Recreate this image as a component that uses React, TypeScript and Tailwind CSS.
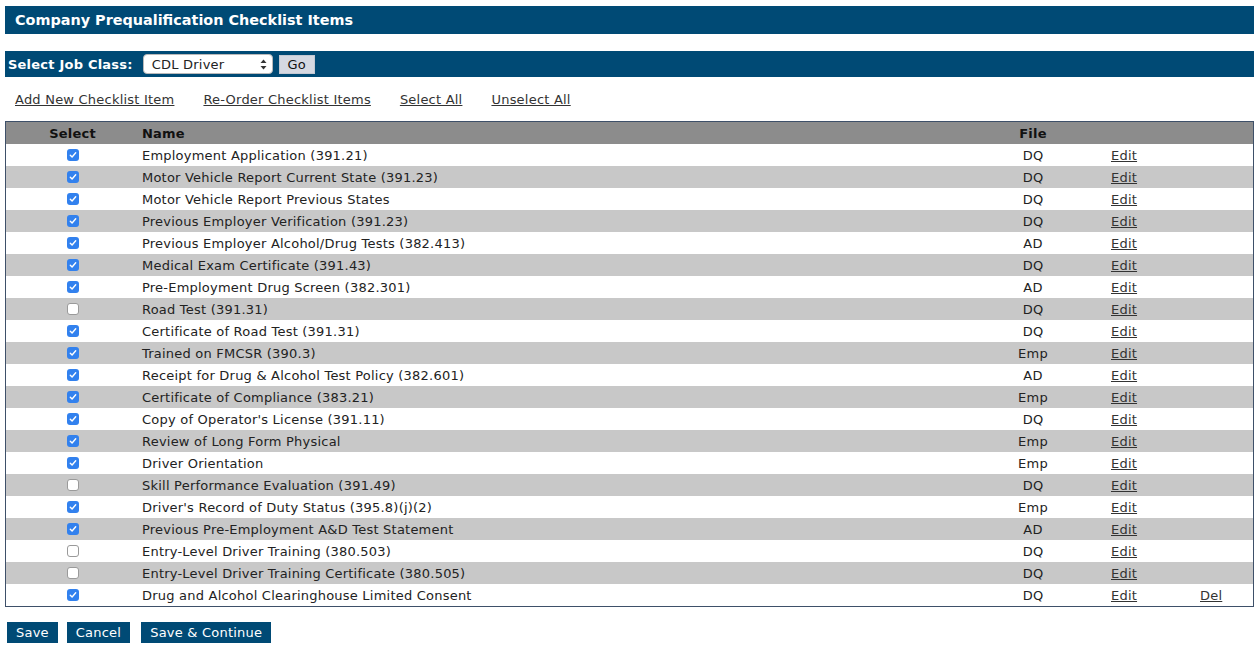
import React from "react";

type Item = { name: string; file: string; checked: boolean; del?: boolean };

const items: Item[] = [
  { name: "Employment Application (391.21)", file: "DQ", checked: true },
  { name: "Motor Vehicle Report Current State (391.23)", file: "DQ", checked: true },
  { name: "Motor Vehicle Report Previous States", file: "DQ", checked: true },
  { name: "Previous Employer Verification (391.23)", file: "DQ", checked: true },
  { name: "Previous Employer Alcohol/Drug Tests (382.413)", file: "AD", checked: true },
  { name: "Medical Exam Certificate (391.43)", file: "DQ", checked: true },
  { name: "Pre-Employment Drug Screen (382.301)", file: "AD", checked: true },
  { name: "Road Test (391.31)", file: "DQ", checked: false },
  { name: "Certificate of Road Test (391.31)", file: "DQ", checked: true },
  { name: "Trained on FMCSR (390.3)", file: "Emp", checked: true },
  { name: "Receipt for Drug & Alcohol Test Policy (382.601)", file: "AD", checked: true },
  { name: "Certificate of Compliance (383.21)", file: "Emp", checked: true },
  { name: "Copy of Operator's License (391.11)", file: "DQ", checked: true },
  { name: "Review of Long Form Physical", file: "Emp", checked: true },
  { name: "Driver Orientation", file: "Emp", checked: true },
  { name: "Skill Performance Evaluation (391.49)", file: "DQ", checked: false },
  { name: "Driver's Record of Duty Status (395.8)(j)(2)", file: "Emp", checked: true },
  { name: "Previous Pre-Employment A&D Test Statement", file: "AD", checked: true },
  { name: "Entry-Level Driver Training (380.503)", file: "DQ", checked: false },
  { name: "Entry-Level Driver Training Certificate (380.505)", file: "DQ", checked: false },
  { name: "Drug and Alcohol Clearinghouse Limited Consent", file: "DQ", checked: true, del: true },
];

function Check({ on }: { on: boolean }) {
  if (!on) {
    return (
      <span className="block w-[12px] h-[12px] rounded-[3px] bg-white border border-[#9a9a9a]" />
    );
  }
  return (
    <span className="flex items-center justify-center w-[12px] h-[12px] rounded-[3px] bg-[#3281ee]">
      <svg width="8" height="8" viewBox="0 0 8 8" fill="none">
        <path d="M1.3 4.2 L3.1 6 L6.7 1.8" stroke="white" strokeWidth="1.4" strokeLinecap="round" strokeLinejoin="round" />
      </svg>
    </span>
  );
}

const cols = "grid grid-cols-[133px_846px_96px_109px_1fr]";

export default function App() {
  return (
    <div className="font-['DejaVu_Sans',Verdana,sans-serif] text-[13px] tracking-[0.22px] text-[#222] bg-white w-[1259px] h-[653px] px-[5px] pt-[6px]">
      <div className="h-[28px] bg-[#004a75] flex items-center pt-[2px] pl-[10px] text-white font-bold text-[14.4px] tracking-normal">
        Company Prequalification Checklist Items
      </div>

      <div className="mt-[17px] h-[26px] bg-[#004a75] flex items-center pl-[3px] text-white">
        <span className="font-bold text-[13px] pt-[1px]">Select Job Class:</span>
        <div className="ml-[10px] w-[130px] h-[20px] bg-white rounded-[4px] border border-[#b9b9b9] flex items-center justify-between pl-[8px] pr-[5px] text-[#222] text-[13px]">
          <span className="pt-[1px]">CDL Driver</span>
          <svg width="7" height="11" viewBox="0 0 7 11">
            <path d="M3.5 0.5 L6.5 4 L0.5 4 Z" fill="#333" />
            <path d="M3.5 10.5 L6.5 7 L0.5 7 Z" fill="#333" />
          </svg>
        </div>
        <div className="ml-[6px] w-[36px] h-[19px] bg-[#d5d9e2] border border-[#c3c8d2] flex items-center justify-center pt-[1px] text-[#111] text-[13px]">
          Go
        </div>
      </div>

      <div className="mt-[13px] flex gap-[29px] pl-[10px] text-[#333] text-[13px] h-[20px] items-center">
        <span className="underline">Add New Checklist Item</span>
        <span className="underline">Re-Order Checklist Items</span>
        <span className="underline">Select All</span>
        <span className="underline">Unselect All</span>
      </div>

      <div className="mt-[11px] border border-[#3e5069]">
        <div className={`${cols} h-[22px] bg-[#8c8c8c] items-center pt-[1px] font-bold text-[#111]`}>
          <div className="text-center">Select</div>
          <div className="pl-[3px]">Name</div>
          <div className="text-center">File</div>
          <div />
          <div />
        </div>
        {items.map((it, i) => (
          <div
            key={i}
            className={`${cols} h-[22px] items-center ${i % 2 === 1 ? "bg-[#c8c8c8]" : "bg-white"}`}
          >
            <div className="flex justify-center">
              <Check on={it.checked} />
            </div>
            <div className="pl-[3px] pt-[1px]">{it.name}</div>
            <div className="text-center pt-[1px]">{it.file}</div>
            <div className="pl-[30px] pt-[1px] text-[#333] underline">Edit</div>
            <div className="pl-[10px] pt-[1px] text-[#333] underline">{it.del ? "Del" : ""}</div>
          </div>
        ))}
      </div>

      <div className="mt-[15px] flex text-white text-[13px]">
        <span className="ml-[2px] h-[21px] px-[9px] pt-[1px] bg-[#004a75] flex items-center">Save</span>
        <span className="ml-[9px] h-[21px] px-[9px] pt-[1px] bg-[#004a75] flex items-center">Cancel</span>
        <span className="ml-[11px] h-[21px] px-[9px] pt-[1px] bg-[#004a75] flex items-center">Save &amp; Continue</span>
      </div>
    </div>
  );
}
